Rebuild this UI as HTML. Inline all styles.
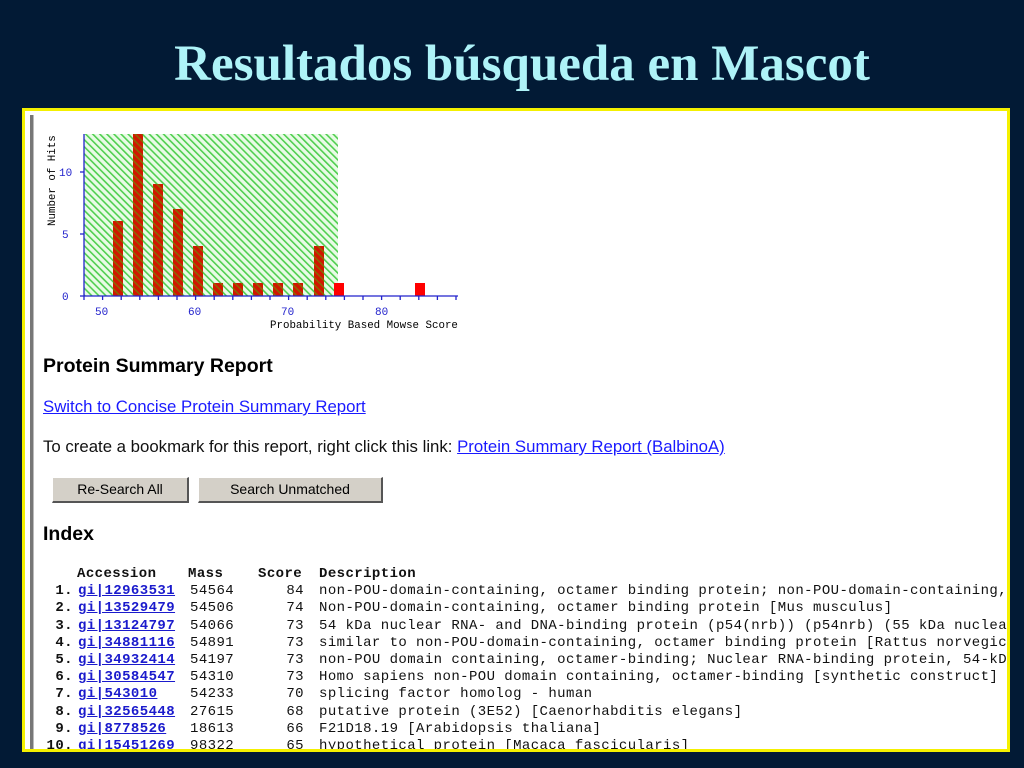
<!DOCTYPE html>
<html><head><meta charset="utf-8"><style>
html,body{margin:0;padding:0}
body{width:1024px;height:768px;background:#021a35;position:relative;overflow:hidden;font-family:"Liberation Sans",sans-serif}
.title{position:absolute;left:0;width:1044px;top:34px;text-align:center;font-family:"Liberation Serif",serif;font-weight:bold;font-size:51px;color:#aef3f8;line-height:60px}
.frame{position:absolute;left:22px;top:108px;width:982px;height:638px;border:3px solid #f4f000;background:#fff;overflow:hidden}
.gbar{position:absolute;left:5px;top:4px;width:3px;height:640px;background:#777;border-right:1px solid #bbb}
.abs{position:absolute;white-space:nowrap}
.h{font-weight:bold;font-size:19.5px;color:#000}
.lk{color:#1a1aff;text-decoration:underline;font-size:16.8px}
.tx{font-size:16.8px;color:#111}
.btn{position:absolute;top:366px;height:23px;background:#d4d0c8;border:1px solid #fff;border-right:2px solid #555;border-bottom:2px solid #555;font-size:14px;text-align:center;line-height:23px;color:#000}
.tbl{position:absolute;top:455px;left:0;width:984px;font-family:"Liberation Mono",monospace;font-size:14px;letter-spacing:0.42px;color:#111}
.row{position:absolute;white-space:nowrap;height:17px;line-height:17px}
.row span{position:absolute}
.a{color:#1a1acc;font-weight:bold;text-decoration:underline}
</style></head><body>
<div class="title">Resultados búsqueda en Mascot</div>
<div class="frame">
<div class="gbar"></div>
<svg class="abs" style="left:-25px;top:-111px" width="1024" height="768">
<defs><pattern id="hp" width="5" height="5" patternUnits="userSpaceOnUse" patternTransform="rotate(-45)"><rect width="5" height="5" fill="#e9fbe6"/><rect width="1.6" height="5" fill="#4fcf4f"/></pattern>
<pattern id="rp" width="5" height="5" patternUnits="userSpaceOnUse" patternTransform="rotate(-45)"><rect width="5" height="5" fill="#d01800"/><rect width="1.5" height="5" fill="#8a6a00"/></pattern></defs>
<rect x="84" y="134" width="254" height="162" fill="url(#hp)"/>
<g fill="url(#rp)">
<rect x="113" y="221" width="10" height="75"/><rect x="133" y="134" width="10" height="162"/>
<rect x="153" y="184" width="10" height="112"/><rect x="173" y="209" width="10" height="87"/>
<rect x="193" y="246" width="10" height="50"/><rect x="213" y="283" width="10" height="13"/>
<rect x="233" y="283" width="10" height="13"/><rect x="253" y="283" width="10" height="13"/>
<rect x="273" y="283" width="10" height="13"/><rect x="293" y="283" width="10" height="13"/>
<rect x="314" y="246" width="10" height="50"/></g>
<rect x="334" y="283" width="10" height="13" fill="#ff0000"/><rect x="415" y="283" width="10" height="13" fill="#ff0000"/>
<g stroke="#2222cc" stroke-width="1.3" fill="none">
<line x1="84" y1="134" x2="84" y2="296"/><line x1="84" y1="296" x2="458" y2="296"/>
<line x1="80" y1="296" x2="84" y2="296"/><line x1="80" y1="234" x2="84" y2="234"/><line x1="80" y1="172" x2="84" y2="172"/>
<path d="M84 296v4M102.6 296v4M121.2 296v4M139.8 296v4M158.4 296v4M177 296v4M195.6 296v4M214.2 296v4M232.8 296v4M251.4 296v4M270 296v4M288.6 296v4M307.2 296v4M325.8 296v4M344.4 296v4M363 296v4M381.6 296v4M400.2 296v4M418.8 296v4M437.4 296v4M456 296v4"/></g>
<g font-family="Liberation Mono,monospace" font-size="11" fill="#2222cc">
<text x="62" y="300">0</text><text x="62" y="238">5</text><text x="59" y="176">10</text>
<text x="95" y="315">50</text><text x="188" y="315">60</text><text x="281" y="315">70</text><text x="375" y="315">80</text></g>
<text x="270" y="328" font-family="Liberation Mono,monospace" font-size="10.8" fill="#000">Probability Based Mowse Score</text>
<text transform="translate(55,226) rotate(-90)" font-family="Liberation Mono,monospace" font-size="10.8" fill="#000">Number of Hits</text>
</svg>
<div class="abs h" style="left:18px;top:244px">Protein Summary Report</div>
<div class="abs lk" style="left:18px;top:286px">Switch to Concise Protein Summary Report</div>
<div class="abs tx" style="left:18px;top:326px">To create a bookmark for this report, right click this link: <span class="lk">Protein Summary Report (BalbinoA)</span></div>
<div class="btn" style="left:27px;width:134px">Re-Search All</div>
<div class="btn" style="left:173px;width:182px">Search Unmatched</div>
<div class="abs h" style="left:18px;top:412px">Index</div>
<div class="tbl">
<div class="row" style="top:0;font-weight:bold"><span style="left:52px">Accession</span><span style="left:163px">Mass</span><span style="left:233px">Score</span><span style="left:294px">Description</span></div>
</div>
</div>
<script>
var d=[["gi|12963531","54564","84","non-POU-domain-containing, octamer binding protein; non-POU-domain-containing, octamer"],
["gi|13529479","54506","74","Non-POU-domain-containing, octamer binding protein [Mus musculus]"],
["gi|13124797","54066","73","54 kDa nuclear RNA- and DNA-binding protein (p54(nrb)) (p54nrb) (55 kDa nuclear protein)"],
["gi|34881116","54891","73","similar to non-POU-domain-containing, octamer binding protein [Rattus norvegicus]"],
["gi|34932414","54197","73","non-POU domain containing, octamer-binding; Nuclear RNA-binding protein, 54-kD; p54"],
["gi|30584547","54310","73","Homo sapiens non-POU domain containing, octamer-binding [synthetic construct]"],
["gi|543010","54233","70","splicing factor homolog - human"],
["gi|32565448","27615","68","putative protein (3E52) [Caenorhabditis elegans]"],
["gi|8778526","18613","66","F21D18.19 [Arabidopsis thaliana]"],
["gi|15451269","98322","65","hypothetical protein [Macaca fascicularis]"]];
var t=document.querySelector('.tbl'),h='';
d.forEach(function(r,i){var top=17.2*(i+1);
h+='<div class="row" style="top:'+top+'px;width:984px"><span style="right:'+(984-48)+'px;font-weight:bold">'+(i+1)+'.</span><span class="a" style="left:53px">'+r[0]+'</span><span style="left:165px">'+r[1]+'</span><span style="right:'+(984-279)+'px">'+r[2]+'</span><span style="left:294px">'+r[3]+'</span></div>';});
t.insertAdjacentHTML('beforeend',h);
</script>
</body></html>
